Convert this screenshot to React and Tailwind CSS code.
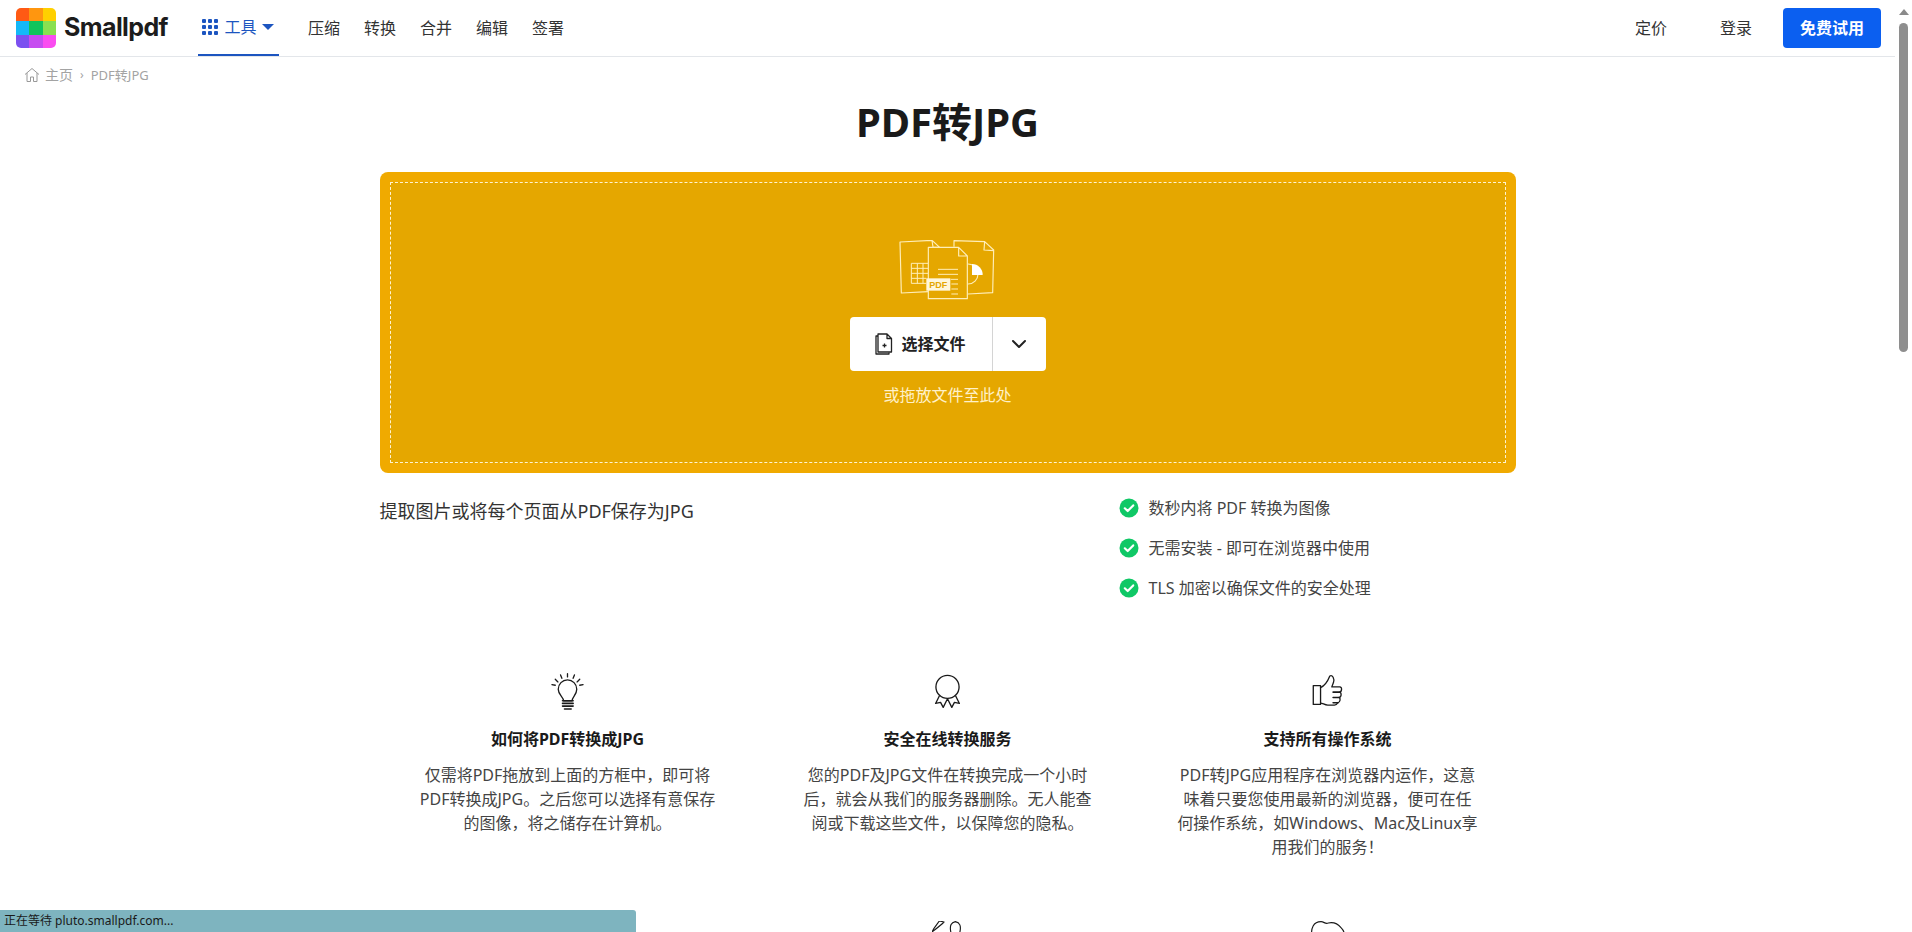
import React from "react";

const Logo = () => (
  <div className="w-10 h-10 rounded-[5px] overflow-hidden grid grid-cols-3 grid-rows-3 shrink-0">
    <div className="bg-[#ff5a14]" /><div className="bg-[#ff960f]" /><div className="bg-[#ffd000]" />
    <div className="bg-[#14b8f8]" /><div className="bg-[#10c45c]" /><div className="bg-[#8ae050]" />
    <div className="bg-[#7c50f0]" /><div className="bg-[#c64cf0]" /><div className="bg-[#fa4cf0]" />
  </div>
);

const GridIcon = () => (
  <svg width="16" height="16" viewBox="0 0 16 16" fill="#1c55c0">
    {[0, 6, 12].map((y) => [0, 6, 12].map((x) => <rect key={x + "-" + y} x={x} y={y} width="4" height="4" rx="1" />))}
  </svg>
);

const Home = () => (
  <svg width="16" height="16" viewBox="0 0 16 16" fill="none" stroke="#999" strokeWidth="1">
    <path d="M1 7.5 8 1.5l7 6M3 6v8.5h3.5V10h3v4.5H13V6" strokeLinejoin="round" />
  </svg>
);

const Check = () => (
  <svg width="20" height="20" viewBox="0 0 20 20" className="shrink-0">
    <circle cx="10" cy="10" r="9.5" fill="#0fc866" />
    <path d="M5.8 10.3 8.7 13l5.5-5.6" fill="none" stroke="#fff" strokeWidth="2.2" strokeLinecap="round" strokeLinejoin="round" />
  </svg>
);

const DocsArt = () => (
  <svg width="100" height="64" viewBox="240 60 300 192" fill="none" stroke="#ffeeb8" strokeWidth="3.5" strokeLinejoin="round">
    <path d="M331 215 250 219 246 66 342 61 365 82M342 61l3 20 20 1" />
    <path d="M280 130h50M280 145h50M280 160h50M280 175h45M280 190h45M280 130v60M298 130v60M315 130v60" strokeWidth="3" />
    <path d="M408 80V62l92 3 27 25-3 128-74 4M500 65l-2 25 29 2" />
    <path d="M450 132a30 30 0 1 1 0 60" />
    <path d="M462 132a32 32 0 0 1 32 33h-32z" fill="#fff" stroke="none" />
    <path d="M331 82h91l26 26v128H331zM422 82v26h26" fill="#e5a700" />
    <path d="M360 148h60M360 163h60M398 178h22M400 192h20M400 207h20M400 222h20" strokeWidth="3" />
    <rect x="325" y="175" width="72" height="37" fill="#fff7dc" stroke="none" />
    <text x="361" y="203" textAnchor="middle" fill="#e5a700" stroke="none" fontSize="27" fontWeight="700" fontFamily="'Liberation Sans',sans-serif">PDF</text>
  </svg>
);

const FileIcon = () => (
  <svg width="18" height="22" viewBox="0 0 18 22" fill="none" stroke="#222" strokeWidth="1.3" strokeLinejoin="round">
    <path d="M3 3H1v18h13v-1.500" />
    <path d="M3 1h9l4.500 4.500V19H3zM12 1v4.500h4.500" fill="#fff" />
    <path d="M7.500 12.500h4M9.500 10.500v4" />
  </svg>
);

const Chevron = () => (
  <svg width="16" height="10" viewBox="0 0 16 10" fill="none" stroke="#222" strokeWidth="2" strokeLinecap="round" strokeLinejoin="round">
    <path d="M2 2l6 6 6-6" />
  </svg>
);

const Bulb = () => (
  <svg width="43" height="43" viewBox="48 35 130 130" fill="none" stroke="#1a1a1a" strokeWidth="4" strokeLinecap="round" strokeLinejoin="round">
    <path d="M101 122c0-12-16-18-16-35a28 28 0 0 1 56 0c0 17-14 23-14 35z" />
    <path d="M98 122h32M98 130h32M98 138h32M104 147h20" strokeWidth="5" />
    <path d="M113 40v10M92 44l4 10M134 44l-4 10M76 57l8 8M150 57l-8 8M66 73l10 2M160 73l-10 2" />
  </svg>
);

const Medal = () => (
  <svg width="43" height="43" viewBox="78 35 130 130" fill="none" stroke="#1a1a1a" strokeWidth="4" strokeLinejoin="round">
    <circle cx="143" cy="80" r="35" />
    <path d="M119 106l-12 24 15-3 8 15 13-26 13 26 8-15 15 3-12-24" />
  </svg>
);

const Thumb = () => (
  <svg width="43" height="43" viewBox="78 35 130 130" fill="none" stroke="#1a1a1a" strokeWidth="4" strokeLinejoin="round" strokeLinecap="round">
    <rect x="100" y="76" width="22" height="57" />
    <path d="M122 82c14-6 22-20 28-35 8-4 15 8 11 20l-5 13h24c8 0 7 15-1 16 7 1 7 15-1 16 5 2 4 15-4 16-2 4-4 7-10 7h-20c-10 0-15-6-22-6" />
    <path d="M160 96h19M160 112h19M160 128h15" strokeWidth="5" />
  </svg>
);

const Rocket = () => (
  <svg width="32" height="30" viewBox="0 0 96 90" fill="none" stroke="#1a1a1a" strokeWidth="3.500" strokeLinejoin="round">
    <path d="M0 33c10-8 24-18 36-30L22 0 6 22z" />
    <path d="M58 40c-8-30 2-36 12-38 12 3 20 10 12 38" />
  </svg>
);

const Cloud = () => (
  <svg width="34" height="30" viewBox="0 0 102 90" fill="none" stroke="#1a1a1a" strokeWidth="3.500" strokeLinejoin="round">
    <path d="M3 50C-2 20 8 2 30 2c10 0 12 8 22 4 20-4 30 4 38 14 8 8 12 20 8 30" />
  </svg>
);

const Feature = ({ icon, title, lines }) => (
  <div className="flex flex-col items-center text-center">
    {icon}
    <h2 className="mt-3 text-base leading-6 font-bold text-[#1a1a1a]">{title}</h2>
    <p className="mt-3 text-base leading-6 text-[#444]">
      {lines.map((l, i) => (
        <span key={i} className="block">{l}</span>
      ))}
    </p>
  </div>
);

const navItems = ["压缩", "转换", "合并", "编辑", "签署"];
const checks = ["数秒内将 PDF 转换为图像", "无需安装 - 即可在浏览器中使用", "TLS 加密以确保文件的安全处理"];

export default function App() {
  return (
    <div className="relative flex w-[1912px] h-[932px] overflow-hidden bg-white font-['Noto_Sans','Noto_Sans_CJK_SC',sans-serif]">
      <main className="flex-1 min-w-0 flex flex-col">
        <header className="h-[57px] shrink-0 border-b border-[#e3e6ea] flex items-center pl-4 pr-[14px]">
          <Logo />
          <span className="ml-2 text-[25px] font-bold tracking-[-0.6px] text-[#1c1c1c] font-['Inter',sans-serif]">Smallpdf</span>
          <div className="ml-[30px] h-full w-[81px] border-b-[2px] border-[#1c55c0] flex items-center justify-center gap-[6px]">
            <GridIcon />
            <span className="text-base text-[#1c55c0]">工具</span>
            <span className="w-0 h-0 border-x-[6px] border-x-transparent border-t-[6px] border-t-[#1c55c0]" />
          </div>
          <nav className="ml-[29px] flex gap-6 text-base text-[#333]">
            {navItems.map((n) => <span key={n}>{n}</span>)}
          </nav>
          <div className="ml-auto flex items-center text-base text-[#333]">
            <span>定价</span>
            <span className="ml-[53px]">登录</span>
            <span className="ml-[31px] w-[98px] h-10 rounded-[4px] bg-[#0b5ff0] text-white font-bold flex items-center justify-center">免费试用</span>
          </div>
        </header>

        <div className="h-9 shrink-0 pl-6 flex items-center text-sm text-[#a3a3a3]">
          <Home />
          <span className="ml-[5px]">主页</span>
          <span className="mx-[7px] text-xs">›</span>
          <span className="text-[13px]">PDF转JPG</span>
        </div>

        <h1 className="mt-[5px] text-center text-[40px] leading-[48px] font-bold text-[#1a1a1a]">PDF转JPG</h1>

        <section className="mt-[26px] mx-auto w-[1136px] h-[301px] shrink-0 p-[10px] rounded-lg bg-[#f0aa00]">
          <div className="h-full border border-dashed border-[#fff3d0] bg-[#e5a700] flex flex-col items-center pt-[57px]">
            <DocsArt />
            <div className="mt-[13px] w-[196px] h-[54px] bg-white rounded-[4px] flex text-[#222]">
              <div className="w-[143px] flex items-center justify-center gap-2 border-r border-[#d4d4d4]">
                <FileIcon />
                <span className="text-base font-bold">选择文件</span>
              </div>
              <div className="flex-1 flex items-center justify-center"><Chevron /></div>
            </div>
            <p className="mt-[12px] text-base leading-6 text-[#fff1c9]">或拖放文件至此处</p>
          </div>
        </section>

        <section className="mx-auto w-[1136px] flex justify-between mt-[15px]">
          <p className="pt-[9px] text-lg leading-7 text-[#333]">提取图片或将每个页面从PDF保存为JPG</p>
          <ul className="w-[397px]">
            {checks.map((c) => (
              <li key={c} className="h-10 flex items-center gap-[10px] text-base text-[#444]">
                <Check />
                {c}
              </li>
            ))}
          </ul>
        </section>

        <section className="mt-16 mx-auto w-[1140px] grid grid-cols-3">
          <Feature icon={<Bulb />} title="如何将PDF转换成JPG" lines={["仅需将PDF拖放到上面的方框中，即可将", "PDF转换成JPG。之后您可以选择有意保存", "的图像，将之储存在计算机。"]} />
          <Feature icon={<Medal />} title="安全在线转换服务" lines={["您的PDF及JPG文件在转换完成一个小时", "后，就会从我们的服务器删除。无人能查", "阅或下载这些文件，以保障您的隐私。"]} />
          <Feature icon={<Thumb />} title="支持所有操作系统" lines={["PDF转JPG应用程序在浏览器内运作，这意", "味着只要您使用最新的浏览器，便可在任", "何操作系统，如Windows、Mac及Linux享", "用我们的服务！"]} />
        </section>

        <section className="mt-[62px] mx-auto w-[1140px] grid grid-cols-3 justify-items-center">
          <div />
          <Rocket />
          <Cloud />
        </section>
      </main>

      <aside className="w-[17px] shrink-0 bg-white flex flex-col items-center">
        <span className="mt-[9px] w-0 h-0 border-x-[5px] border-x-transparent border-b-[6px] border-b-[#8a8a8a]" />
        <span className="mt-[8px] w-[9px] h-[329px] rounded-full bg-[#8e8e8e]" />
      </aside>

      <div className="absolute left-0 bottom-0 w-[636px] h-[22px] rounded-tr-[3px] bg-[#7eb4bf] pl-1 flex items-center text-xs text-[#1a1a1a]">
        正在等待 pluto.smallpdf.com...
      </div>
    </div>
  );
}
